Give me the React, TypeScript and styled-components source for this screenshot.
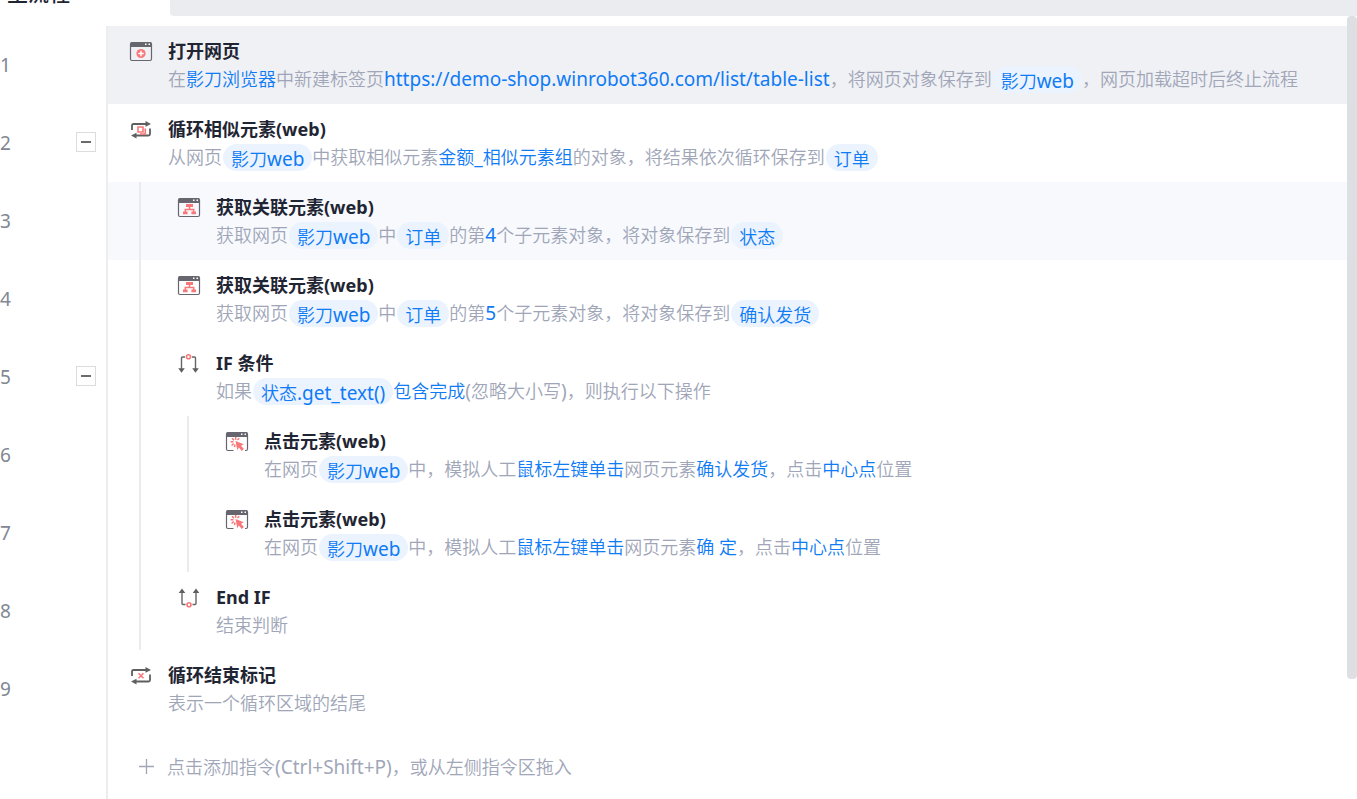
import React from 'react';
import styled, { createGlobalStyle } from 'styled-components';

const GlobalStyle = createGlobalStyle`
  *, *::before, *::after { box-sizing: border-box; }
  body {
    margin: 0;
    background: #ffffff;
    color: #1f2533;
    font-family: "Noto Sans", "Noto Sans CJK SC", sans-serif;
    font-size: 18px;
  }
  button { font: inherit; cursor: pointer; }
`;

const Page = styled.div`
  display: flex;
  flex-direction: column;
  height: 100vh;
  overflow: hidden;
`;

const TopBar = styled.header`
  display: flex;
  align-items: flex-end;
  flex: none;
  height: 16px;
  overflow: hidden;
`;

const TabTitle = styled.h1`
  flex: none;
  width: 170px;
  margin: 0;
  padding: 0 0 11px 7px;
  font-size: 21px;
  line-height: 24px;
  font-weight: 500;
`;

const SearchStrip = styled.div`
  flex: 1;
  height: 16px;
  background: #ebecf0;
  border-bottom-left-radius: 4px;
`;

const Workspace = styled.main`
  display: flex;
  flex: 1;
  min-height: 0;
`;

const Flow = styled.div`
  display: flex;
  flex-direction: column;
  flex: 1;
  min-width: 0;
  padding-top: 10px;
  overflow: hidden;
`;

const ScrollTrack = styled.div`
  flex: none;
  width: 10px;
`;

const ScrollThumb = styled.div`
  height: calc(100% - 120px);
  border-radius: 4px;
  background: #dedfe3;
`;

const Steps = styled.ol`
  margin: 0;
  padding: 0;
  list-style: none;
`;

const Step = styled.li`
  display: flex;
  height: 78px;
`;

const Gutter = styled.div`
  display: flex;
  align-items: center;
  justify-content: space-between;
  flex: none;
  width: 106px;
  padding: 0 10px 2px 0;
`;

const StepNumber = styled.span`
  padding-top: 2px;
  font-size: 19px;
  color: #7f8794;
`;

const CollapseButton = styled.button`
  display: flex;
  align-items: center;
  justify-content: center;
  width: 20px;
  height: 20px;
  padding: 0;
  border: 1px solid #dcdcde;
  background: #ffffff;

  &::before {
    content: "";
    width: 10px;
    height: 2px;
    background: #6b6b6e;
  }
`;

type Tone = 'plain' | 'hover' | 'selected';
const toneColors: Record<Tone, string> = {
  plain: 'transparent',
  hover: '#f7f9fd',
  selected: '#f0f1f5',
};

const StepBody = styled.div<{ $tone: Tone }>`
  display: flex;
  flex: 1;
  min-width: 0;
  border-left: 2px solid #ecedf1;
  background: ${(p) => toneColors[p.$tone]};
`;

const Guide = styled.span`
  flex: none;
  width: 48px;
  padding-left: 31px;

  &::before {
    content: "";
    display: block;
    width: 2px;
    height: 100%;
    background: #ebebed;
  }
`;

const IconSlot = styled.span`
  flex: none;
  width: 60px;
  padding: 15px 0 0 21px;

  svg { display: block; }
`;

const StepText = styled.div`
  padding-top: 11px;
  white-space: pre;
`;

const StepTitle = styled.h2`
  margin: 0;
  font-size: 18px;
  line-height: 29px;
  font-weight: 700;
`;

const Description = styled.p`
  display: flex;
  align-items: flex-start;
  height: 29px;
  margin: 0;
  line-height: 26px;
  font-weight: 350;
  color: #a0a6b8;
`;

const ValueText = styled.span`
  color: #0f7bf5;
`;

const VariablePill = styled.span`
  height: 27px;
  margin-left: 1px;
  padding: 3px 8px 0;
  border-radius: 14px;
  background: #ebf3ff;
  color: #0f7bf5;
  line-height: 25px;
`;

const Latin = styled.span`
  font-size: 19px;
  line-height: 20px;
  font-weight: 400;
`;

const Tail = styled.div`
  display: flex;
  flex: 1;
  margin-left: 106px;
  border-left: 2px solid #ecedf1;
`;

const AddButton = styled.button`
  display: flex;
  align-items: center;
  gap: 12px;
  align-self: flex-start;
  height: 28px;
  margin: 24px 0 0 30px;
  padding: 0;
  border: 0;
  background: transparent;
  color: #a0a6b8;
  font-weight: 350;
  white-space: nowrap;
`;

// Latin letters run slightly heavier and larger than the Chinese text around them.
const mixed = (text: string) =>
  text.split(/([\x21-\x7e]+)/).map((part, i) => (i % 2 ? <Latin key={i}>{part}</Latin> : part));

const Plain = ({ children }: { children: string }) => <span>{mixed(children)}</span>;
const Value = ({ children }: { children: string }) => <ValueText>{mixed(children)}</ValueText>;
const Variable = ({ children }: { children: string }) => <VariablePill>{mixed(children)}</VariablePill>;

const DARK = '#67666e';
const PINK = '#f8787a';

const WindowFrame = ({ open = false }: { open?: boolean }) => (
  <>
    <path
      d={open ? 'M8.5 19.5H3q-1.500 0-1.500-1.500V3M22.500 3v15q0 1.500-1.500 1.500h-1' : 'M1.500 3v15q0 1.500 1.500 1.500h18q1.500 0 1.500-1.500V3'}
      fill="none"
      stroke={DARK}
      strokeWidth="1.200"
    />
    <path d="M1 6V2.500Q1 1 2.500 1h19Q23 1 23 2.500V6z" fill={DARK} />
    <path d="M16 2.500h1.500V4H16zM19.500 2.500H21V4h-1.500z" fill="#fff" />
  </>
);

const OpenPageIcon = () => (
  <svg width="25" height="21" viewBox="0 0 25 21" aria-hidden="true">
    <WindowFrame />
    <circle cx="12" cy="12.500" r="4.600" fill={PINK} />
    <path d="M12 9.800v5.400M9.300 12.500h5.400" stroke="#fff" strokeWidth="1.400" />
  </svg>
);

const RelatedIcon = () => (
  <svg width="25" height="21" viewBox="0 0 25 21" aria-hidden="true">
    <WindowFrame />
    <path d="M9 7h7v3H9zM6 14.500h4.600v2.700H6zM14.400 14.500H19v2.700h-4.600z" fill={PINK} />
    <path d="M12.500 10v2.500M8.300 15v-2.400h8.400V15" fill="none" stroke={PINK} strokeWidth="1.500" />
  </svg>
);

const ClickIcon = () => (
  <svg width="25" height="21" viewBox="0 0 25 21" aria-hidden="true">
    <WindowFrame open />
    <path d="M10.500 9.900l8.300 3.300-2.800 1.500 2.900 3.300-2.100 1.900-3-3.300-1.500 2.600z" fill={PINK} />
    <path
      d="M10.700 6v2.700M7 7.200l1.900 1.900M5.600 10.800h2.900M6.600 14.500l2.100-2M10 13.500l-.5 2.700M14.200 7.200l-1.800 1.900"
      stroke={PINK}
      strokeWidth="1.500"
    />
  </svg>
);

const LoopArrows = () => (
  <>
    <path
      d="M3 11V6.500Q3 5 4.500 5H17M21 9.500V15q0 1.500-1.500 1.500H7"
      fill="none"
      stroke="#5f5f61"
      strokeWidth="1.800"
    />
    <path d="M16.500 2L22 5l-5.500 2.700zM7.500 13.800L2 16.500l5.500 3z" fill="#5f5f61" />
  </>
);

const LoopIcon = () => (
  <svg width="25" height="21" viewBox="0 0 25 21" aria-hidden="true">
    <LoopArrows />
    <path d="M9 8h5v5H9zM16.300 9.500V15H11" fill="none" stroke={PINK} strokeWidth="1.600" />
  </svg>
);

const LoopEndIcon = () => (
  <svg width="25" height="21" viewBox="0 0 25 21" aria-hidden="true">
    <LoopArrows />
    <path d="M9.500 8.300l5 5M14.500 8.300l-5 5" stroke={PINK} strokeWidth="1.600" />
  </svg>
);

const IfIcon = () => (
  <svg width="25" height="21" viewBox="0 0 25 21" aria-hidden="true">
    <path d="M4.500 16V5q0-1 1-1H8M15 4h2.500q1 0 1 1v11" fill="none" stroke="#666668" strokeWidth="1.400" />
    <path d="M1.200 15.200h6.600l-3.300 4.600zM15.200 15.200h6.600l-3.300 4.600z" fill="#5f5f61" />
    <circle cx="11.500" cy="3.800" r="2" fill="none" stroke={PINK} strokeWidth="1.600" />
  </svg>
);

const EndIfIcon = () => (
  <svg width="25" height="21" viewBox="0 0 25 21" aria-hidden="true">
    <path d="M5 5v11.500q0 1 1 1h2.500M15.500 17.500H18q1 0 1-1V5" fill="none" stroke="#666668" strokeWidth="1.400" />
    <path d="M1.700 6h6.600L5 1.400zM15.700 6h6.600L19 1.400z" fill="#5f5f61" />
    <circle cx="12" cy="17.800" r="2" fill="none" stroke={PINK} strokeWidth="1.600" />
  </svg>
);

const PlusIcon = () => (
  <svg width="17" height="17" viewBox="0 0 17 17" aria-hidden="true">
    <path d="M8.500 1v15M1 8.500h15" stroke="#a0a6b8" strokeWidth="1.300" />
  </svg>
);

type StepData = {
  title: string;
  level: number;
  icon: React.ReactNode;
  description: React.ReactNode;
  tone?: Tone;
  group?: boolean;
};

const related = (child: string, target: string) => (
  <>
    <Plain>获取网页</Plain><Variable>影刀web</Variable><Plain>中</Plain><Variable>订单</Variable>
    <Plain>的第</Plain><Value>{child}</Value><Plain>个子元素对象，将对象保存到</Plain><Variable>{target}</Variable>
  </>
);

const clicked = (target: string) => (
  <>
    <Plain>在网页</Plain><Variable>影刀web</Variable><Plain>中，模拟人工</Plain><Value>鼠标左键单击</Value>
    <Plain>网页元素</Plain><Value>{target}</Value><Plain>，点击</Plain><Value>中心点</Value><Plain>位置</Plain>
  </>
);

const steps: StepData[] = [
  {
    title: '打开网页',
    level: 0,
    icon: <OpenPageIcon />,
    tone: 'selected',
    description: (
      <>
        <Plain>在</Plain><Value>影刀浏览器</Value><Plain>中新建标签页</Plain>
        <Value>https://demo-shop.winrobot360.com/list/table-list</Value>
        <Plain>，将网页对象保存到</Plain><Variable>影刀web</Variable><Plain>，网页加载超时后终止流程</Plain>
      </>
    ),
  },
  {
    title: '循环相似元素(web)',
    level: 0,
    icon: <LoopIcon />,
    group: true,
    description: (
      <>
        <Plain>从网页</Plain><Variable>影刀web</Variable><Plain>中获取相似元素</Plain>
        <Value>金额_相似元素组</Value><Plain>的对象，将结果依次循环保存到</Plain><Variable>订单</Variable>
      </>
    ),
  },
  { title: '获取关联元素(web)', level: 1, icon: <RelatedIcon />, tone: 'hover', description: related('4', '状态') },
  { title: '获取关联元素(web)', level: 1, icon: <RelatedIcon />, description: related('5', '确认发货') },
  {
    title: 'IF 条件',
    level: 1,
    icon: <IfIcon />,
    group: true,
    description: (
      <>
        <Plain>如果</Plain><Variable>状态.get_text()</Variable><Value>包含完成</Value>
        <Plain>(忽略大小写)，则执行以下操作</Plain>
      </>
    ),
  },
  { title: '点击元素(web)', level: 2, icon: <ClickIcon />, description: clicked('确认发货') },
  { title: '点击元素(web)', level: 2, icon: <ClickIcon />, description: clicked('确 定') },
  { title: 'End IF', level: 1, icon: <EndIfIcon />, description: <Plain>结束判断</Plain> },
  { title: '循环结束标记', level: 0, icon: <LoopEndIcon />, description: <Plain>表示一个循环区域的结尾</Plain> },
];

export default function App() {
  return (
    <Page lang="zh-CN">
      <GlobalStyle />
      <TopBar>
        <TabTitle>主流程</TabTitle>
        <SearchStrip />
      </TopBar>
      <Workspace>
        <Flow>
          <Steps>
            {steps.map((step, index) => (
              <Step key={index}>
                <Gutter>
                  <StepNumber>{index + 1}</StepNumber>
                  {step.group && <CollapseButton type="button" aria-label={`折叠 ${step.title}`} />}
                </Gutter>
                <StepBody $tone={step.tone ?? 'plain'}>
                  {Array.from({ length: step.level }, (_, level) => <Guide key={level} />)}
                  <IconSlot>{step.icon}</IconSlot>
                  <StepText>
                    <StepTitle>{step.title}</StepTitle>
                    <Description>{step.description}</Description>
                  </StepText>
                </StepBody>
              </Step>
            ))}
          </Steps>
          <Tail>
            <AddButton type="button">
              <PlusIcon />
              <Plain>点击添加指令(Ctrl+Shift+P)，或从左侧指令区拖入</Plain>
            </AddButton>
          </Tail>
        </Flow>
        <ScrollTrack>
          <ScrollThumb />
        </ScrollTrack>
      </Workspace>
    </Page>
  );
}
